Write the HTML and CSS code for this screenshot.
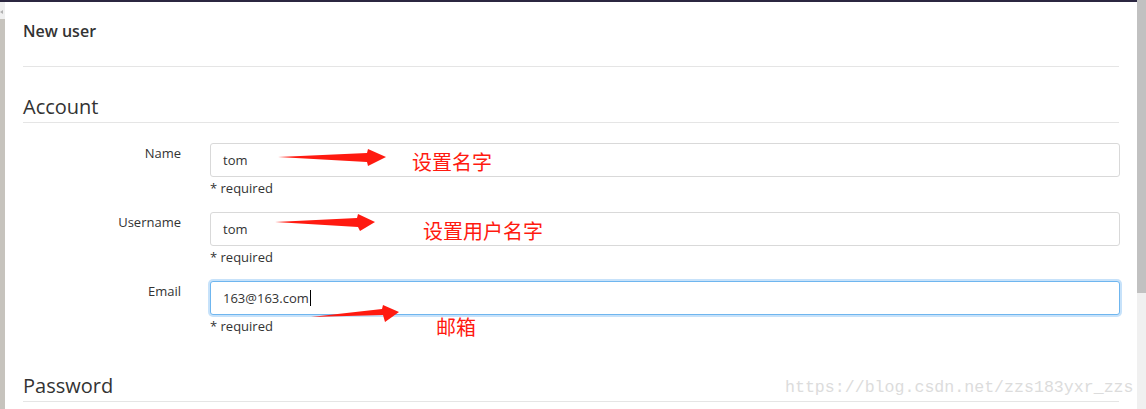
FILE: index.html
```html
<!DOCTYPE html>
<html lang="en">
<head>
<meta charset="utf-8">
<title>New user</title>
<link rel="stylesheet" href="styles.css">
</head>
<body>
<div class="window">
  <div class="viewport">
    <div class="topbar"></div>
    <div class="page-row">
      <div class="gutter"><div class="gutter-cap"><span class="gutter-mark"></span></div></div>
      <main class="content">
        <header class="page-header"><h4 class="page-title">New user</h4></header>
        <h3 class="section-title section-first">Account</h3>
        <div class="form-group">
          <label class="form-label">Name</label>
          <div class="form-field">
            <div class="input">tom</div>
            <div class="help">* required</div>
          </div>
        </div>
        <div class="form-group">
          <label class="form-label">Username</label>
          <div class="form-field">
            <div class="input">tom</div>
            <div class="help">* required</div>
          </div>
        </div>
        <div class="form-group">
          <label class="form-label">Email</label>
          <div class="form-field">
            <div class="input input-focus">163@163.com<span class="caret"></span></div>
            <div class="help">* required</div>
          </div>
        </div>
        <h3 class="section-title section-next">Password</h3>
      </main>
    </div>
  </div>
  <div class="scrollbar"><div class="thumb"></div></div>
</div>

<svg class="annotations" width="1146" height="409" viewBox="0 0 1146 409">
  <polygon points="278,157 367,153 368,149 386,157 368,166 367,162" fill="#ff1a10"/>
  <polygon points="275,222 357,218 358,214 375,222 360,231 358,227" fill="#ff1a10"/>
  <polygon points="311,317 382,309 383,305 399,312 385,322 383,315" fill="#ff1a10"/>
</svg>
<span class="note note-1">设置名字</span>
<span class="note note-2">设置用户名字</span>
<span class="note note-3">邮箱</span>
<span class="watermark">https://blog.csdn.net/zzs183yxr_zzs</span>
</body>
</html>
```
FILE: styles.css
```css
html, body {
  margin: 0;
  padding: 0;
  background: #ffffff;
}
body {
  width: 1146px;
  height: 409px;
  overflow: hidden;
  position: relative;
  font-family: "Open Sans", "Noto Sans", sans-serif;
  color: #333333;
  font-size: 13px;
}
.window {
  display: flex;
  height: 409px;
}
.viewport {
  flex: 1;
  display: flex;
  flex-direction: column;
}
.topbar {
  height: 2px;
  background: #2b2640;
}
.page-row {
  flex: 1;
  display: flex;
}
.gutter {
  width: 5px;
  background: #c6c3bd;
  display: flex;
  flex-direction: column;
}
.gutter-cap {
  height: 17px;
  background: #efefef;
  position: relative;
}
.gutter-mark {
  position: absolute;
  left: 0;
  top: 8px;
  width: 0;
  height: 0;
  border-top: 2px solid transparent;
  border-bottom: 2px solid transparent;
  border-right: 3px solid #b0b0b0;
}
.content {
  flex: 1;
  margin: 0 18px;
}
.page-header {
  padding: 19px 0 25px;
  border-bottom: 1px solid #e5e5e5;
}
.page-title {
  margin: 0;
  font-size: 16px;
  line-height: 20px;
  font-weight: 600;
  color: #333333;
}
.section-title {
  margin: 0;
  padding-bottom: 3px;
  font-size: 20px;
  line-height: 24px;
  font-weight: 400;
  color: #333333;
  border-bottom: 1px solid #e5e5e5;
}
.section-first {
  margin-top: 28px;
  margin-bottom: 20px;
}
.section-next {
  margin-top: 39px;
}
.form-group {
  display: grid;
  grid-template-columns: 158px 1fr;
  column-gap: 29px;
  margin-bottom: 15px;
}
.form-label {
  text-align: right;
  padding-top: 1px;
  line-height: 18px;
  font-size: 13px;
  color: #333333;
}
.input {
  box-sizing: border-box;
  height: 34px;
  margin-right: -1px;
  border: 1px solid #d9d9d9;
  border-radius: 3px;
  padding: 0 12px;
  line-height: 32px;
  font-size: 13px;
  color: #333333;
  background: #ffffff;
  display: flex;
  align-items: center;
}
.input-focus {
  border-color: #6fb6ef;
  box-shadow: 0 0 0 2px rgba(130, 190, 245, 0.45);
}
.caret {
  display: inline-block;
  width: 1px;
  height: 16px;
  background: #000000;
  margin-left: 1px;
}
.help {
  margin-top: 2px;
  line-height: 18px;
  font-size: 13px;
  color: #333333;
}
.scrollbar {
  width: 9px;
  background: #f0f0f0;
}
.thumb {
  height: 293px;
  background: #c1c1c1;
}
.annotations {
  position: absolute;
  left: 0;
  top: 0;
  pointer-events: none;
}
.note {
  position: absolute;
  font-family: "Noto Sans CJK SC", sans-serif;
  font-size: 20px;
  line-height: 24px;
  color: #ff1a10;
  white-space: nowrap;
}
.note-1 { left: 412px; top: 150px; }
.note-2 { left: 423px; top: 219px; }
.note-3 { left: 436px; top: 315px; }
.watermark {
  position: absolute;
  left: 785px;
  top: 377px;
  font-family: "Liberation Mono", monospace;
  font-size: 16.6px;
  line-height: 22px;
  color: #dcdcdc;
  white-space: nowrap;
}
```
